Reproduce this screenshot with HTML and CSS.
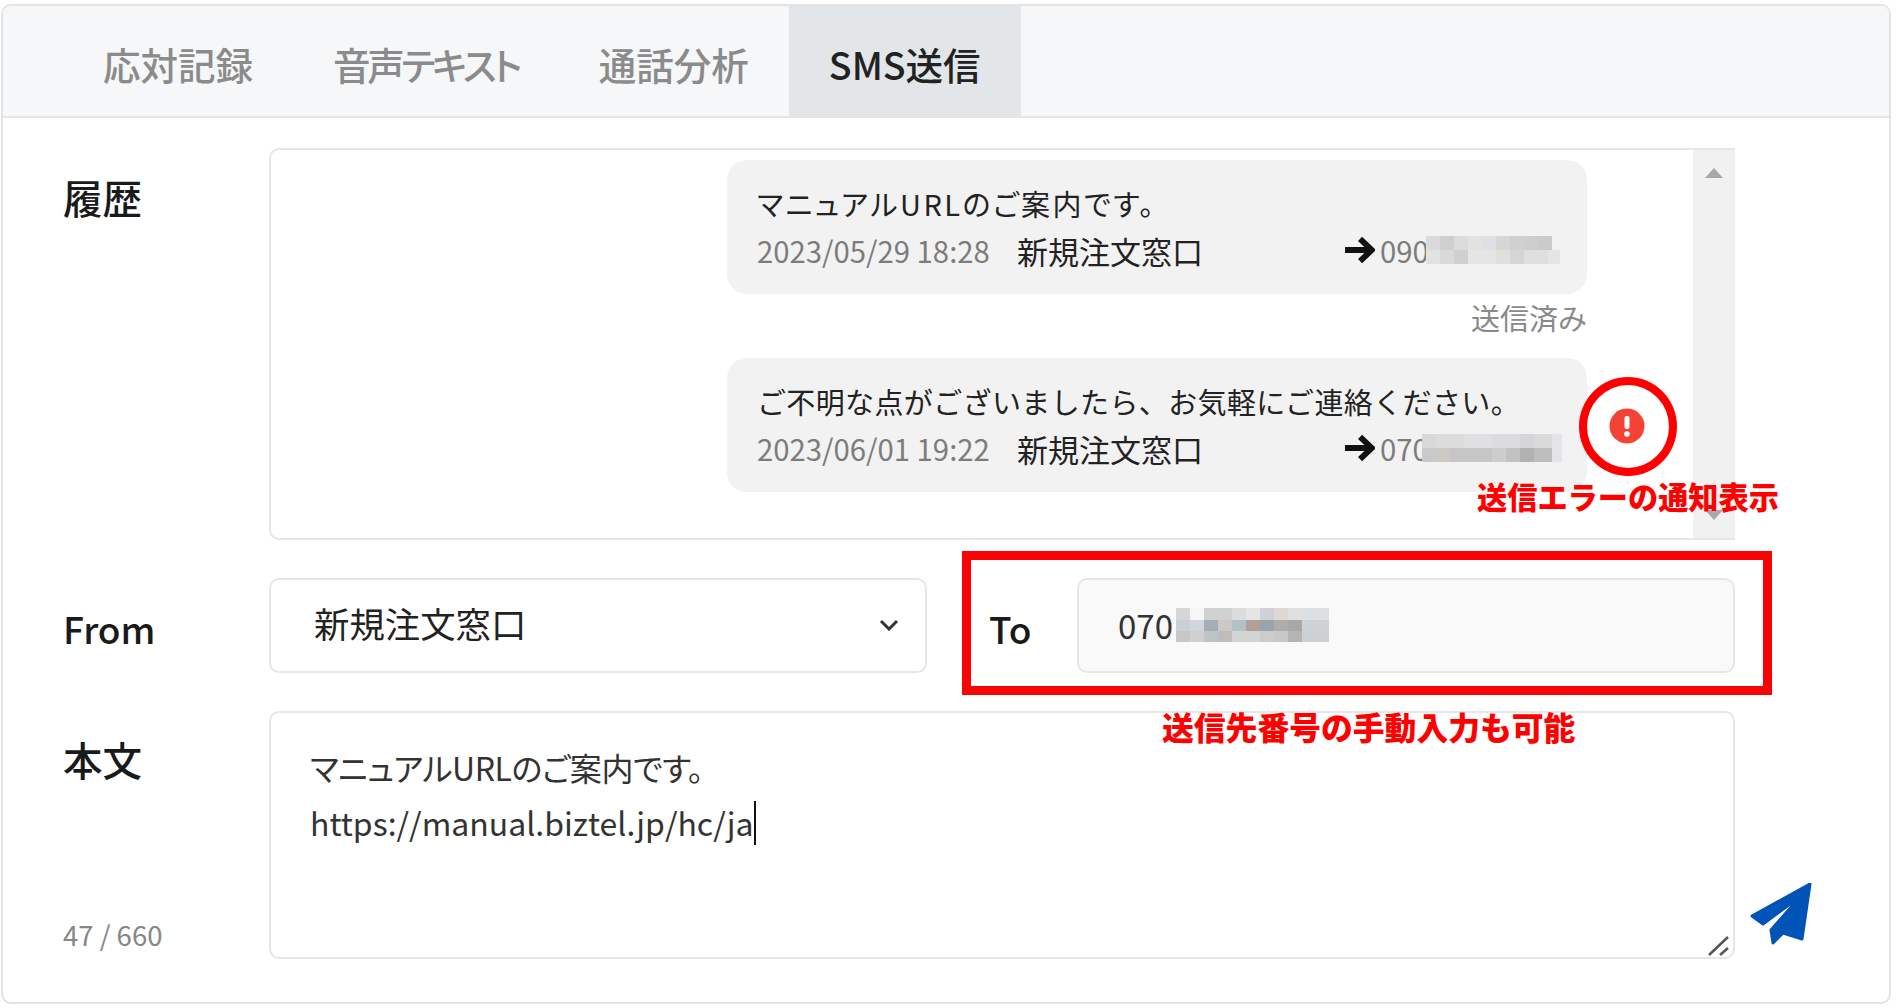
FILE: index.html
```html
<!DOCTYPE html>
<html lang="ja">
<head>
<meta charset="utf-8">
<title>SMS送信</title>
<link rel="stylesheet" href="styles.css">
</head>
<body>
<div class="card">
  <nav class="tabs">
    <div class="tab">応対記録</div>
    <div class="tab tab-narrow">音声テキスト</div>
    <div class="tab">通話分析</div>
    <div class="tab tab-active">SMS送信</div>
  </nav>
  <main class="form">
    <div class="label label-history">履歴</div>
    <section class="history">
      <div class="messages">
        <article class="bubble">
          <p class="msg msg-tight">マニュアルURLのご案内です。</p>
          <div class="meta">
            <span class="date">2023/05/29 18:28</span>
            <span class="sender">新規注文窓口</span>
            <svg class="arrow" viewBox="0 0 29 26"><path d="M1 13H25M15 2.5 26 13 15 23.5"/></svg>
            <span class="num">090</span><span class="mosaic mosaic-a"></span>
          </div>
        </article>
        <div class="status">送信済み</div>
        <article class="bubble">
          <p class="msg msg-wide">ご不明な点がございましたら、お気軽にご連絡ください。</p>
          <div class="meta">
            <span class="date">2023/06/01 19:22</span>
            <span class="sender">新規注文窓口</span>
            <svg class="arrow" viewBox="0 0 29 26"><path d="M1 13H25M15 2.5 26 13 15 23.5"/></svg>
            <span class="num num-b">070</span><span class="mosaic mosaic-b"></span>
          </div>
          <svg class="error-icon" viewBox="0 0 36 36"><circle cx="18" cy="18" r="17.5" fill="#f44336"/><rect x="15.5" y="8" width="5" height="13" rx="2" fill="#fff"/><circle cx="18" cy="26" r="2.8" fill="#fff"/></svg>
        </article>
      </div>
      <div class="scrollbar">
        <span class="tri tri-up"></span>
        <span class="tri tri-down"></span>
      </div>
    </section>
    <div></div>

    <div class="label label-from">From</div>
    <div class="address">
      <div class="select">
        <span>新規注文窓口</span>
        <svg class="chevron" viewBox="0 0 20 12"><path d="M2 2 10 10 18 2"/></svg>
      </div>
      <div class="label label-to">To</div>
      <div class="to-input">
        <span>070</span><span class="mosaic mosaic-c"></span>
      </div>
    </div>
    <div></div>

    <div class="label-body">
      <div class="label">本文</div>
      <div class="count">47 / 660</div>
    </div>
    <div class="editor">
      <div class="editor-line editor-tight">マニュアルURLのご案内です。</div>
      <div class="editor-line">https://manual.biztel.jp/hc/ja<span class="caret"></span></div>
      <svg class="resizer" viewBox="0 0 22 20"><path d="M1 19 20 1M12 19 20 12"/></svg>
    </div>
    <div class="send">
      <svg class="plane" viewBox="0 0 62 62"><path d="M60 1 2 33 13 41 51 13 21 47 23 60 33 50 52 56Z"/></svg>
    </div>
  </main>

  <div class="note-ring"></div>
  <div class="note note-error">送信エラーの通知表示</div>
  <div class="note-box"></div>
  <div class="note note-to">送信先番号の手動入力も可能</div>
</div>
</body>
</html>
```

FILE: styles.css
```css
* { box-sizing: border-box; }

html, body { margin: 0; height: 100%; background: #fff; }

body {
  padding: 4px 5px 4px 1px;
  font-family: "Noto Sans CJK JP", "Noto Sans", sans-serif;
  font-feature-settings: "palt";
  color: #222;
}

.card {
  position: relative;
  height: 1000px;
  border: 2px solid #e3e3e3;
  border-radius: 10px;
  overflow: hidden;
}

.tabs {
  display: flex;
  height: 112px;
  padding-left: 60px;
  background: #f6f7f9;
  border-bottom: 2px solid #e4e6e8;
}

.tab {
  display: flex;
  align-items: center;
  padding: 4px 40px 0;
  font-size: 37.5px;
  font-weight: 500;
  color: #8b8b8b;
  white-space: nowrap;
}

.tab-narrow { letter-spacing: -3.3px; }

.tab-active {
  background: #e2e6e9;
  color: #222;
}

.form {
  display: grid;
  grid-template-columns: 206px 1466px 1fr;
  grid-template-rows: 392px 95px 248px;
  row-gap: 38px;
  padding: 30px 0 0 60px;
}

.label {
  font-size: 39.5px;
  font-weight: 500;
  line-height: 48px;
  color: #1a1a1a;
}

.label-history { padding-top: 25px; }
.label-from { align-self: center; padding-top: 5px; font-size: 37px; }
.label-to { padding-top: 5px; font-size: 37px; }

.history {
  display: flex;
  border: 2px solid #e6e6e6;
  border-right: 0;
  border-radius: 10px 0 0 10px;
}

.messages {
  flex: 1;
  display: flex;
  flex-direction: column;
  align-items: flex-end;
  padding: 10px 106px 0 0;
}

.bubble {
  position: relative;
  width: 860px;
  height: 134px;
  padding: 22px 30px 0;
  border-radius: 20px;
  background: #f2f2f2;
}

.msg {
  margin: 0;
  font-size: 29px;
  font-feature-settings: normal;
  line-height: 42px;
  color: #222;
  white-space: nowrap;
}

.msg-tight {
  font-feature-settings: "palt";
  letter-spacing: 2.5px;
}

.msg-wide { letter-spacing: 0.37px; }

.meta {
  display: flex;
  align-items: center;
  height: 40px;
  margin-top: 6px;
  font-size: 29.3px;
}

.date { width: 260px; color: #7c7c7c; }
.sender { flex: 1; font-size: 31px; color: #222; }
.num { width: 46px; color: #7c7c7c; }
.num-b { width: 42px; }

.arrow {
  width: 31px;
  height: 28px;
  margin-right: 5px;
  fill: none;
  stroke: #111;
  stroke-width: 5.5;
}

.mosaic { display: block; flex: none; background-repeat: no-repeat; }

.mosaic-a {
  width: 134px;
  height: 28px;
  margin-right: -3px;
  background-image:
    linear-gradient(90deg, #dadada 0 14px, #d0cfcf 14px 28px, #dcdcdc 28px 42px, #e3e2df 42px 56px, #dde0e5 56px 70px, #d6d6d6 70px 84px, #d0d0d0 84px 98px, #cecece 98px 112px, #cbcbcb 112px 126px, #f2f2f2 126px),
    linear-gradient(90deg, #e2e2e2 0 14px, #d9d9d9 14px 28px, #cfcfcf 28px 42px, #e5e5e3 42px 70px, #dfdfdd 70px 84px, #d3d5d8 84px 98px, #dfdfdf 98px 122px, #e3e5e9 122px);
  background-size: 100% 14px;
  background-position: 0 0, 0 14px;
}

.mosaic-b {
  width: 140px;
  height: 28px;
  margin-right: -5px;
  background-image:
    linear-gradient(90deg, #d8d8d8 0 14px, #dcdcdc 14px 42px, #e0e0e2 42px 70px, #dcdcdf 70px 98px, #d6d6d8 98px 112px, #dadada 112px 130px, #e3e5e9 130px),
    linear-gradient(90deg, #c9c9c9 0 14px, #cdcac6 14px 28px, #c6c6c6 28px 70px, #cdcdcd 70px 84px, #c2c2c2 84px 98px, #b2b2b2 98px 112px, #bebebe 112px 130px, #e3e5e9 130px);
  background-size: 100% 14px;
  background-position: 0 0, 0 14px;
}

.mosaic-c {
  width: 153px;
  height: 34px;
  margin-left: 3px;
  background-image:
    linear-gradient(90deg, #d6d6d6 0 14px, #f6f6f6 14px 28px, #d0d2d2 28px 56px, #dcdcdc 56px 70px, #e4e6e6 70px 84px, #d0d0d6 84px 98px, #ded8d2 98px 112px, #e0e0e0 112px 126px, #dde0e3 126px),
    linear-gradient(90deg, #ccd0d6 0 14px, #d2d6dc 14px 28px, #a5adb5 28px 42px, #cec8c4 42px 56px, #b4c0c6 56px 70px, #b0a098 70px 84px, #9aa4aa 84px 98px, #b0aca8 98px 112px, #a8a8a8 112px 126px, #cfd3d6 126px),
    linear-gradient(90deg, #c8c8c8 0 14px, #d0d0d0 14px 28px, #bcc4c8 28px 42px, #c0bcb8 42px 56px, #d2d4d6 56px 84px, #cccccc 84px 98px, #c8c8c8 98px 112px, #b4b4b4 112px 126px, #cdd1d3 126px);
  background-size: 100% 12px;
  background-position: 0 0, 0 11px, 0 22px;
}

.status {
  width: 100%;
  height: 64px;
  padding-top: 1px;
  text-align: right;
  font-size: 29px;
  font-feature-settings: normal;
  line-height: 44px;
  color: #8a8a8a;
}

.error-icon {
  position: absolute;
  top: 50px;
  left: 882px;
  width: 36px;
  height: 36px;
}

.scrollbar {
  display: flex;
  flex-direction: column;
  justify-content: space-between;
  align-items: center;
  width: 42px;
  padding: 18px 0;
  background: #f1f1f1;
}

.tri { width: 0; height: 0; border-left: 9px solid transparent; border-right: 9px solid transparent; }
.tri-up { border-bottom: 10px solid #a8a8a8; }
.tri-down { border-top: 10px solid #a8a8a8; }

.address { display: flex; }

.select {
  display: flex;
  align-items: center;
  justify-content: space-between;
  width: 658px;
  padding: 0 26px 6px 43px;
  border: 2px solid #e6e6e6;
  border-radius: 10px;
  font-size: 35.4px;
  color: #222;
}

.chevron { width: 20px; height: 12px; margin-top: 5px; fill: none; stroke: #333; stroke-width: 3; }

.label-to { align-self: center; width: 88px; margin-left: 62px; }

.to-input {
  display: flex;
  align-items: center;
  width: 658px;
  padding: 0 0 2px 39px;
  border: 2px solid #e6e6e6;
  border-radius: 10px;
  background: #f9f9f9;
  font-size: 33px;
  color: #333;
}

.label-body {
  display: flex;
  flex-direction: column;
  justify-content: space-between;
  padding: 24px 0 7px;
}

.count { font-size: 27.5px; line-height: 36px; color: #868686; }

.editor {
  position: relative;
  padding: 27px 39px;
  border: 2px solid #e6e6e6;
  border-radius: 10px;
  font-size: 32px;
  line-height: 55px;
  color: #333;
}

.editor-line { white-space: nowrap; }
.editor-tight { letter-spacing: -0.4px; }

.caret {
  display: inline-block;
  width: 2px;
  height: 44px;
  margin-left: 1px;
  vertical-align: -9px;
  background: #111;
}

.resizer {
  position: absolute;
  right: 3px;
  bottom: 1px;
  width: 22px;
  height: 20px;
  fill: none;
  stroke: #555;
  stroke-width: 2.5;
}

.send { display: flex; align-items: flex-end; padding: 0 0 14px 15px; }

.plane {
  width: 62px;
  height: 62px;
  fill: #0054b8;
  stroke: #0054b8;
  stroke-width: 3;
  stroke-linejoin: round;
}

.note {
  position: absolute;
  font-weight: 900;
  font-feature-settings: normal;
  line-height: 40px;
  color: #f00;
  white-space: nowrap;
}

.note-error { left: 1474px; top: 470px; font-size: 30.2px; }
.note-to { left: 1159px; top: 700px; font-size: 31.8px; }

.note-ring {
  position: absolute;
  left: 1576px;
  top: 371px;
  width: 98px;
  height: 99px;
  border: 8px solid #f00;
  border-radius: 50%;
}

.note-box {
  position: absolute;
  left: 959px;
  top: 545px;
  width: 810px;
  height: 144px;
  border: 9px solid #f80404;
}
```
